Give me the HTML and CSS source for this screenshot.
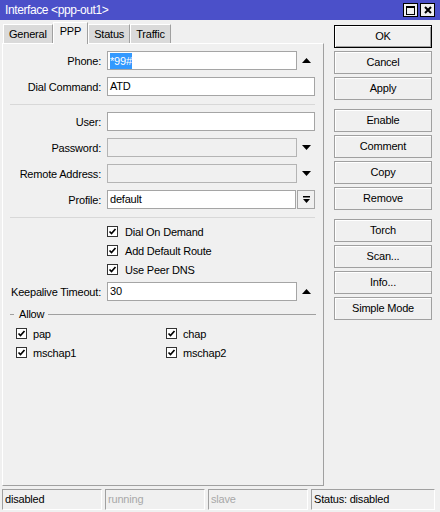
FILE: index.html
```html
<!DOCTYPE html>
<html>
<head>
<meta charset="utf-8">
<link rel="stylesheet" href="styles.css">
</head>
<body>
<div class="window">
  <div class="titlebar">
    <span class="title">Interface &lt;ppp-out1&gt;</span>
    <div class="tb-buttons">
      <span class="tb-btn"><svg width="9" height="9" viewBox="0 0 9 9"><rect x="0.5" y="0.5" width="8" height="8" fill="none" stroke="#000"/><line x1="0" y1="1.5" x2="9" y2="1.5" stroke="#000"/></svg></span>
      <span class="tb-btn"><svg width="8" height="8" viewBox="0 0 8 8"><path d="M1 1L7 7M7 1L1 7" stroke="#000" stroke-width="2"/></svg></span>
    </div>
  </div>
  <div class="main">
    <div class="left">
      <div class="tabs">
        <div class="tab">General</div>
        <div class="tab active">PPP</div>
        <div class="tab">Status</div>
        <div class="tab">Traffic</div>
      </div>
      <div class="panel">
        <div class="row">
          <span class="label">Phone:</span>
          <span class="input short"><span class="sel">*99#</span></span>
          <span class="arrow-cell"><svg width="9" height="5" viewBox="0 0 9 5"><polygon points="0,5 4.5,0 9,5" fill="#000"/></svg></span>
        </div>
        <div class="row">
          <span class="label">Dial Command:</span>
          <span class="input full">ATD</span>
        </div>
        <div class="sep sep1"></div>
        <div class="row">
          <span class="label">User:</span>
          <span class="input full"></span>
        </div>
        <div class="row">
          <span class="label">Password:</span>
          <span class="input short disabled"></span>
          <span class="arrow-cell"><svg width="9" height="5" viewBox="0 0 9 5"><polygon points="0,0 9,0 4.5,5" fill="#000"/></svg></span>
        </div>
        <div class="row">
          <span class="label">Remote Address:</span>
          <span class="input short disabled"></span>
          <span class="arrow-cell"><svg width="9" height="5" viewBox="0 0 9 5"><polygon points="0,0 9,0 4.5,5" fill="#000"/></svg></span>
        </div>
        <div class="row">
          <span class="label">Profile:</span>
          <span class="input profile">default</span>
          <span class="drop-btn"><svg width="7" height="8" viewBox="0 0 7 8"><rect x="0" y="0" width="7" height="1.5" fill="#000"/><polygon points="0,3 7,3 3.5,7" fill="#000"/></svg></span>
        </div>
        <div class="sep sep2"></div>
        <div class="checks">
          <div class="check"><span class="box"><svg width="9" height="9" viewBox="0 0 9 9"><path d="M1.5 4.5L3.5 6.5L7.5 2" fill="none" stroke="#000" stroke-width="1.7"/></svg></span>Dial On Demand</div>
          <div class="check"><span class="box"><svg width="9" height="9" viewBox="0 0 9 9"><path d="M1.5 4.5L3.5 6.5L7.5 2" fill="none" stroke="#000" stroke-width="1.7"/></svg></span>Add Default Route</div>
          <div class="check"><span class="box"><svg width="9" height="9" viewBox="0 0 9 9"><path d="M1.5 4.5L3.5 6.5L7.5 2" fill="none" stroke="#000" stroke-width="1.7"/></svg></span>Use Peer DNS</div>
        </div>
        <div class="row keepalive">
          <span class="label">Keepalive Timeout:</span>
          <span class="input short">30</span>
          <span class="arrow-cell"><svg width="9" height="5" viewBox="0 0 9 5"><polygon points="0,5 4.5,0 9,5" fill="#000"/></svg></span>
        </div>
        <div class="allow-head">
          <span class="dash"></span>
          <span class="allow-title">Allow</span>
          <span class="line"></span>
        </div>
        <div class="allow-grid">
          <div class="acheck"><span class="box"><svg width="9" height="9" viewBox="0 0 9 9"><path d="M1.5 4.5L3.5 6.5L7.5 2" fill="none" stroke="#000" stroke-width="1.7"/></svg></span>pap</div>
          <div class="acheck"><span class="box"><svg width="9" height="9" viewBox="0 0 9 9"><path d="M1.5 4.5L3.5 6.5L7.5 2" fill="none" stroke="#000" stroke-width="1.7"/></svg></span>chap</div>
          <div class="acheck"><span class="box"><svg width="9" height="9" viewBox="0 0 9 9"><path d="M1.5 4.5L3.5 6.5L7.5 2" fill="none" stroke="#000" stroke-width="1.7"/></svg></span>mschap1</div>
          <div class="acheck"><span class="box"><svg width="9" height="9" viewBox="0 0 9 9"><path d="M1.5 4.5L3.5 6.5L7.5 2" fill="none" stroke="#000" stroke-width="1.7"/></svg></span>mschap2</div>
        </div>
      </div>
    </div>
    <div class="buttons">
      <div class="btn default">OK</div>
      <div class="btn">Cancel</div>
      <div class="btn">Apply</div>
      <div class="btn group">Enable</div>
      <div class="btn">Comment</div>
      <div class="btn">Copy</div>
      <div class="btn">Remove</div>
      <div class="btn group">Torch</div>
      <div class="btn">Scan...</div>
      <div class="btn">Info...</div>
      <div class="btn">Simple Mode</div>
    </div>
  </div>
  <div class="statusbar">
    <div class="cell c1">disabled</div>
    <div class="cell c2 dim">running</div>
    <div class="cell c3 dim">slave</div>
    <div class="cell c4">Status: disabled</div>
  </div>
</div>
</body>
</html>
```
FILE: styles.css
```css
* { box-sizing: border-box; }
html, body { margin: 0; padding: 0; }
body {
  width: 440px;
  height: 512px;
  background: #f0f0f0;
  font-family: "Liberation Sans", Arial, sans-serif;
  font-size: 11px;
  letter-spacing: -0.2px;
  color: #000;
  overflow: hidden;
}
.window { display: flex; flex-direction: column; height: 512px; }

.titlebar {
  height: 20px;
  background: #4b50c9;
  color: #fff;
  display: flex;
  align-items: center;
  justify-content: space-between;
  padding: 0 5px 0 5px;
  font-size: 12px;
  letter-spacing: -0.4px;
}
.tb-buttons { display: flex; gap: 2px; }
.tb-btn {
  width: 15px;
  height: 14px;
  background: #f0f0f0;
  border: 1px solid #000;
  display: flex;
  align-items: center;
  justify-content: center;
}

.main { display: flex; padding: 2px 0 0 2px; }
.left { width: 322px; display: flex; flex-direction: column; }
.tabs {
  display: flex;
  height: 21px;
  align-items: flex-end;
  padding-left: 1px;
  position: relative;
  z-index: 1;
}
.tab {
  height: 19px;
  background: #dadada;
  padding: 0 5px;
  line-height: 18px;
  border-left: 1px solid #fff;
  border-top: 1px solid #fff;
  border-right: 1px solid #a0a0a0;
}
.tab.active {
  height: 22px;
  background: #f0f0f0;
  margin-bottom: -1px;
  padding: 0 6px;
  line-height: 17px;
}

.panel {
  height: 443px;
  border-top: 1px solid #fff;
  border-left: 1px solid #fff;
  border-right: 1px solid #a0a0a0;
  border-bottom: 1px solid #a0a0a0;
  padding-top: 7px;
  display: flex;
  flex-direction: column;
}
.row { display: flex; align-items: center; height: 19px; margin-bottom: 7px; flex-shrink: 0; }
.label { width: 98px; text-align: right; margin-right: 6px; white-space: nowrap; }
.input {
  height: 19px;
  background: #fff;
  border: 1px solid #a5a5a5;
  padding-left: 2px;
  line-height: 17px;
  display: flex;
  align-items: center;
}
.input.short { width: 190px; }
.input.full { width: 208px; }
.input.profile { width: 189px; margin-right: 1px; }
.input.disabled { background: #f0f0f0; border-color: #b4b4b4; }
.sel { background: #3399ff; color: #fff; line-height: 16px; }
.arrow-cell { width: 18px; display: flex; justify-content: center; align-items: center; }
.drop-btn {
  width: 18px;
  height: 19px;
  border: 1px solid #a5a5a5;
  background: #f0f0f0;
  display: flex;
  align-items: center;
  justify-content: center;
}

.sep { height: 1px; background: #d8d8d8; margin-left: 7px; width: 305px; flex-shrink: 0; }
.sep1 { margin-top: 1px; margin-bottom: 7px; }
.sep2 { margin-top: 1px; margin-bottom: 4px; }

.checks { display: flex; flex-direction: column; }
.check { display: flex; align-items: center; height: 19px; padding-left: 104px; }
.box {
  width: 11px;
  height: 11px;
  border: 1px solid #333;
  background: #fff;
  margin-right: 7px;
  display: flex;
  align-items: center;
  justify-content: center;
  flex-shrink: 0;
}
.row.keepalive { margin-top: 3px; margin-bottom: 0; }

.allow-head {
  display: flex;
  align-items: center;
  height: 14px;
  margin: 6px 7px 0 7px;
}
.allow-head .dash { width: 4px; height: 1px; background: #a0a0a0; }
.allow-title { margin: 0 4px 0 5px; }
.allow-head .line { flex: 1; height: 1px; background: #a0a0a0; }
.allow-grid {
  display: grid;
  grid-template-columns: 150px 150px;
  padding-left: 13px;
  margin-top: 3px;
}
.acheck { display: flex; align-items: center; height: 19px; }
.acheck .box { margin-right: 6px; }

.buttons { display: flex; flex-direction: column; width: 98px; margin-left: 10px; margin-top: 3px; }
.btn {
  height: 23px;
  margin-bottom: 3px;
  border: 1px solid #a0a0a0;
  box-shadow: inset 1px 1px #fff;
  background: #f0f0f0;
  text-align: center;
  line-height: 21px;
}
.btn.default { border-color: #000; box-shadow: inset 1px 1px #fff, inset -1px -1px #a0a0a0; }
.btn.group { margin-top: 6px; }

.statusbar { display: flex; gap: 3px; padding: 0 2px; margin-top: 3px; height: 21px; }
.cell {
  border-top: 1px solid #a0a0a0;
  border-left: 1px solid #a0a0a0;
  border-right: 1px solid #fff;
  border-bottom: 1px solid #fff;
  padding-left: 2px;
  line-height: 19px;
  white-space: nowrap;
}
.c1, .c2, .c3 { width: 100px; }
.c4 { width: 124px; }
.dim { color: #a8a8a8; }
```
